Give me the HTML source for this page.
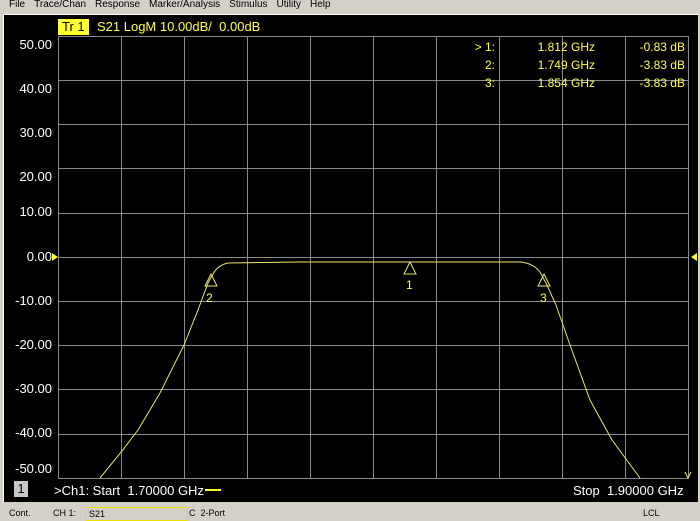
<!DOCTYPE html>
<html><head><style>
body{margin:0;width:700px;height:521px;background:#d4d0c8;font-family:"Liberation Sans",sans-serif;overflow:hidden;position:relative}
.menu{position:absolute;top:0px;left:0;font-size:10px;line-height:10px;color:#000;white-space:nowrap}
.menu span{margin-left:9px}
.panel{position:absolute;left:3px;top:14px;width:694px;height:487px;background:#000;border-top:1px solid #fff;border-left:1px solid #fff}
.t{position:absolute;color:#fff;font-size:13px;white-space:nowrap}
.y{position:absolute;left:8px;width:44px;text-align:right;color:#fff;font-size:13px}
.st{position:absolute;top:508px;font-size:9px;color:#000;white-space:nowrap}
</style></head><body>
<div class="menu"><span>File</span><span>Trace/Chan</span><span>Response</span><span>Marker/Analysis</span><span>Stimulus</span><span>Utility</span><span>Help</span></div>
<div class="panel"></div>
<div class="t" style="left:58px;top:19px;background:#ffff30;color:#000;padding:0 4px;height:16px;line-height:16px">Tr 1</div>
<div class="t" style="left:97px;top:19px;color:#ffff50;line-height:16px">S21 LogM 10.00dB/&nbsp; 0.00dB</div>
<div class="y" style="top:37px">50.00</div>
<div class="y" style="top:81px">40.00</div>
<div class="y" style="top:125px">30.00</div>
<div class="y" style="top:169px">20.00</div>
<div class="y" style="top:204px">10.00</div>
<div class="y" style="top:249px">0.00</div>
<div class="y" style="top:293px">-10.00</div>
<div class="y" style="top:337px">-20.00</div>
<div class="y" style="top:381px">-30.00</div>
<div class="y" style="top:425px">-40.00</div>
<div class="y" style="top:461px">-50.00</div>
<svg style="position:absolute;left:0;top:0" width="700" height="521">
<g stroke="#8a8a8a" stroke-width="1" fill="none">
<rect x="58.5" y="36.5" width="630" height="442"/>
<path d="M121.5 36V478M184.5 36V478M247.5 36V478M310.5 36V478M373.5 36V478M436.5 36V478M499.5 36V478M562.5 36V478M625.5 36V478"/>
<path d="M58 80.5H688M58 124.5H688M58 168.5H688M58 213.5H688M58 257.5H688M58 301.5H688M58 345.5H688M58 389.5H688M58 434.5H688"/>
</g>
<path d="M100 478 L122 451 L138 430 L160 393 L184 345 L198 310 L208 283 L213 274 Q218 265 228 263 L300 262 L410 262 L520 262 Q533 263 540 272 L546 283 L556 305 L570 345 L590 400 L612 440 L640 478" stroke="#e8e870" stroke-width="1" fill="none"/>
<g stroke="#e8e870" fill="none"><path d="M211 274L205 286H217Z"/><path d="M410 262L404 274H416Z"/><path d="M544 274L538 286H550Z"/></g>
<path d="M52 253L58 257L52 261Z" fill="#ffff30"/><path d="M697 253L691 257L697 261Z" fill="#ffff30"/>
<path d="M205 490H221" stroke="#ffff30" stroke-width="2"/>
<path d="M688 478L685 472M688 478L691 472" stroke="#e8e870"/>
</svg>
<div class="t" style="left:206px;top:291px;color:#ffff50;font-size:12px">2</div>
<div class="t" style="left:406px;top:278px;color:#ffff50;font-size:12px">1</div>
<div class="t" style="left:540px;top:291px;color:#ffff50;font-size:12px">3</div>
<div class="t" style="left:440px;top:38px;width:55px;text-align:right;color:#ffff50;font-size:12px;line-height:18px">&gt; 1:<br>2:<br>3:</div>
<div class="t" style="left:530px;top:38px;width:65px;text-align:right;color:#ffff50;font-size:12px;line-height:18px">1.812 GHz<br>1.749 GHz<br>1.854 GHz</div>
<div class="t" style="left:620px;top:38px;width:65px;text-align:right;color:#ffff50;font-size:12px;line-height:18px">-0.83 dB<br>-3.83 dB<br>-3.83 dB</div>
<div class="t" style="left:14px;top:481px;background:#c8c8c8;color:#000;width:14px;text-align:center;height:16px;line-height:16px">1</div>
<div class="t" style="left:54px;top:483px">&gt;Ch1: Start&nbsp; 1.70000 GHz</div>
<div class="t" style="left:573px;top:483px">Stop&nbsp; 1.90000 GHz</div>
<div class="st" style="left:9px">Cont.</div>
<div class="st" style="left:53px">CH 1:</div>
<div style="position:absolute;left:85px;top:507px;width:98px;height:12px;border:1px solid #e8e000;font-size:9px;line-height:12px;padding-left:3px">S21</div>
<div class="st" style="left:189px">C&nbsp; 2-Port</div>
<div class="st" style="left:643px">LCL</div>
</body></html>
